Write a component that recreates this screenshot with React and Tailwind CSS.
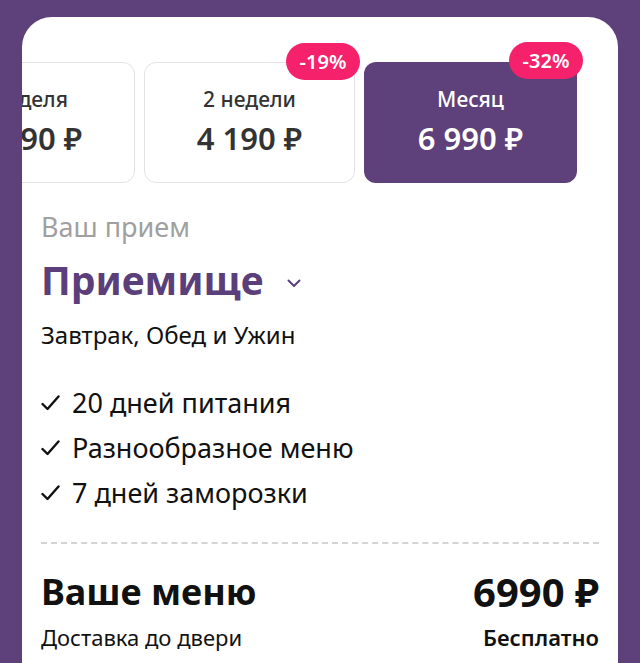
import React from 'react';

const plans = [
    { label: 'Неделя', price: '2 490 ₽' },
    { label: '2 недели', price: '4 190 ₽', badge: '-19%' },
    { label: 'Месяц', price: '6 990 ₽', badge: '-32%', active: true },
];

const features = ['20 дней питания', 'Разнообразное меню', '7 дней заморозки'];

function Check() {
    return (
        <svg width="19" height="16" viewBox="0 0 19 16" fill="none" className="shrink-0">
            <path d="M1.5 9 L6.5 14 L17.5 1.5" stroke="#111" strokeWidth="2.4" strokeLinecap="round" strokeLinejoin="round" />
        </svg>
    );
}

export default function App() {
    return (
        <div
            className="h-[663px] w-[640px] overflow-hidden bg-[#5e407a] pt-[17px]"
            style={{ fontFamily: '"Noto Sans", "Open Sans", sans-serif' }}
        >
            <div className="mx-[22px] h-[700px] overflow-hidden rounded-t-[30px] bg-white">
                {/* plan tabs, scrolled */}
                <div className="ml-[-98px] flex gap-[9px] pt-[45px]">
                    {plans.map((p) => (
                        <div
                            key={p.label}
                            className={
                                p.active
                                    ? 'relative flex h-[121px] w-[213px] shrink-0 flex-col items-center justify-center rounded-[12px] bg-[#5e407a] pb-[4px] text-white'
                                    : 'relative flex h-[121px] w-[211px] shrink-0 flex-col items-center justify-center rounded-[12px] border border-[#e2e2e2] bg-white pb-[4px] text-[#333]'
                            }
                        >
                            {p.badge && (
                                <span className="absolute right-[-6px] top-[-20px] flex h-[37px] w-[74px] items-center justify-center rounded-full bg-[#f5226b] text-[20px] font-semibold text-white">
                                    {p.badge}
                                </span>
                            )}
                            <span className="text-[21px] font-medium leading-[28px]">{p.label}</span>
                            <span className="mt-[6px] text-[31px] font-semibold leading-[38px]">{p.price}</span>
                        </div>
                    ))}
                </div>

                <div className="px-[19px]">
                    <p className="mt-[27px] text-[27px] leading-[34px] text-[#a0a0a0]">Ваш прием</p>

                    <div className="mt-[12px] flex items-center gap-[24px]">
                        <h2 className="text-[39px] font-bold leading-[48px] text-[#5b3f7a]">Приемище</h2>
                        <svg width="14" height="9" viewBox="0 0 14 9" fill="none" className="mt-[6px]">
                            <path d="M1.5 1.5 L7 7 L12.5 1.5" stroke="#5b3f7a" strokeWidth="2" strokeLinecap="round" strokeLinejoin="round" />
                        </svg>
                    </div>

                    <p className="mt-[15px] text-[24px] leading-[32px] text-[#111]">Завтрак, Обед и Ужин</p>

                    <ul className="mt-[34px] flex flex-col gap-[9px]">
                        {features.map((f) => (
                            <li key={f} className="flex items-center gap-[12px] text-[27px] leading-[36px] text-[#111]">
                                <Check />
                                {f}
                            </li>
                        ))}
                    </ul>

                    <div className="mt-[31px] border-t-2 border-dashed border-[#d4d4d4]" />

                    <div className="mt-[26px] flex items-center justify-between">
                        <span className="text-[36px] font-bold leading-[44px] text-[#111]">Ваше меню</span>
                        <span className="text-[40px] font-bold leading-[44px] text-[#111]">6990 ₽</span>
                    </div>
                    <div className="mt-[8px] flex items-center justify-between text-[22px] leading-[30px] text-[#111]">
                        <span>Доставка до двери</span>
                        <span className="font-semibold">Бесплатно</span>
                    </div>
                </div>
            </div>
        </div>
    );
}
